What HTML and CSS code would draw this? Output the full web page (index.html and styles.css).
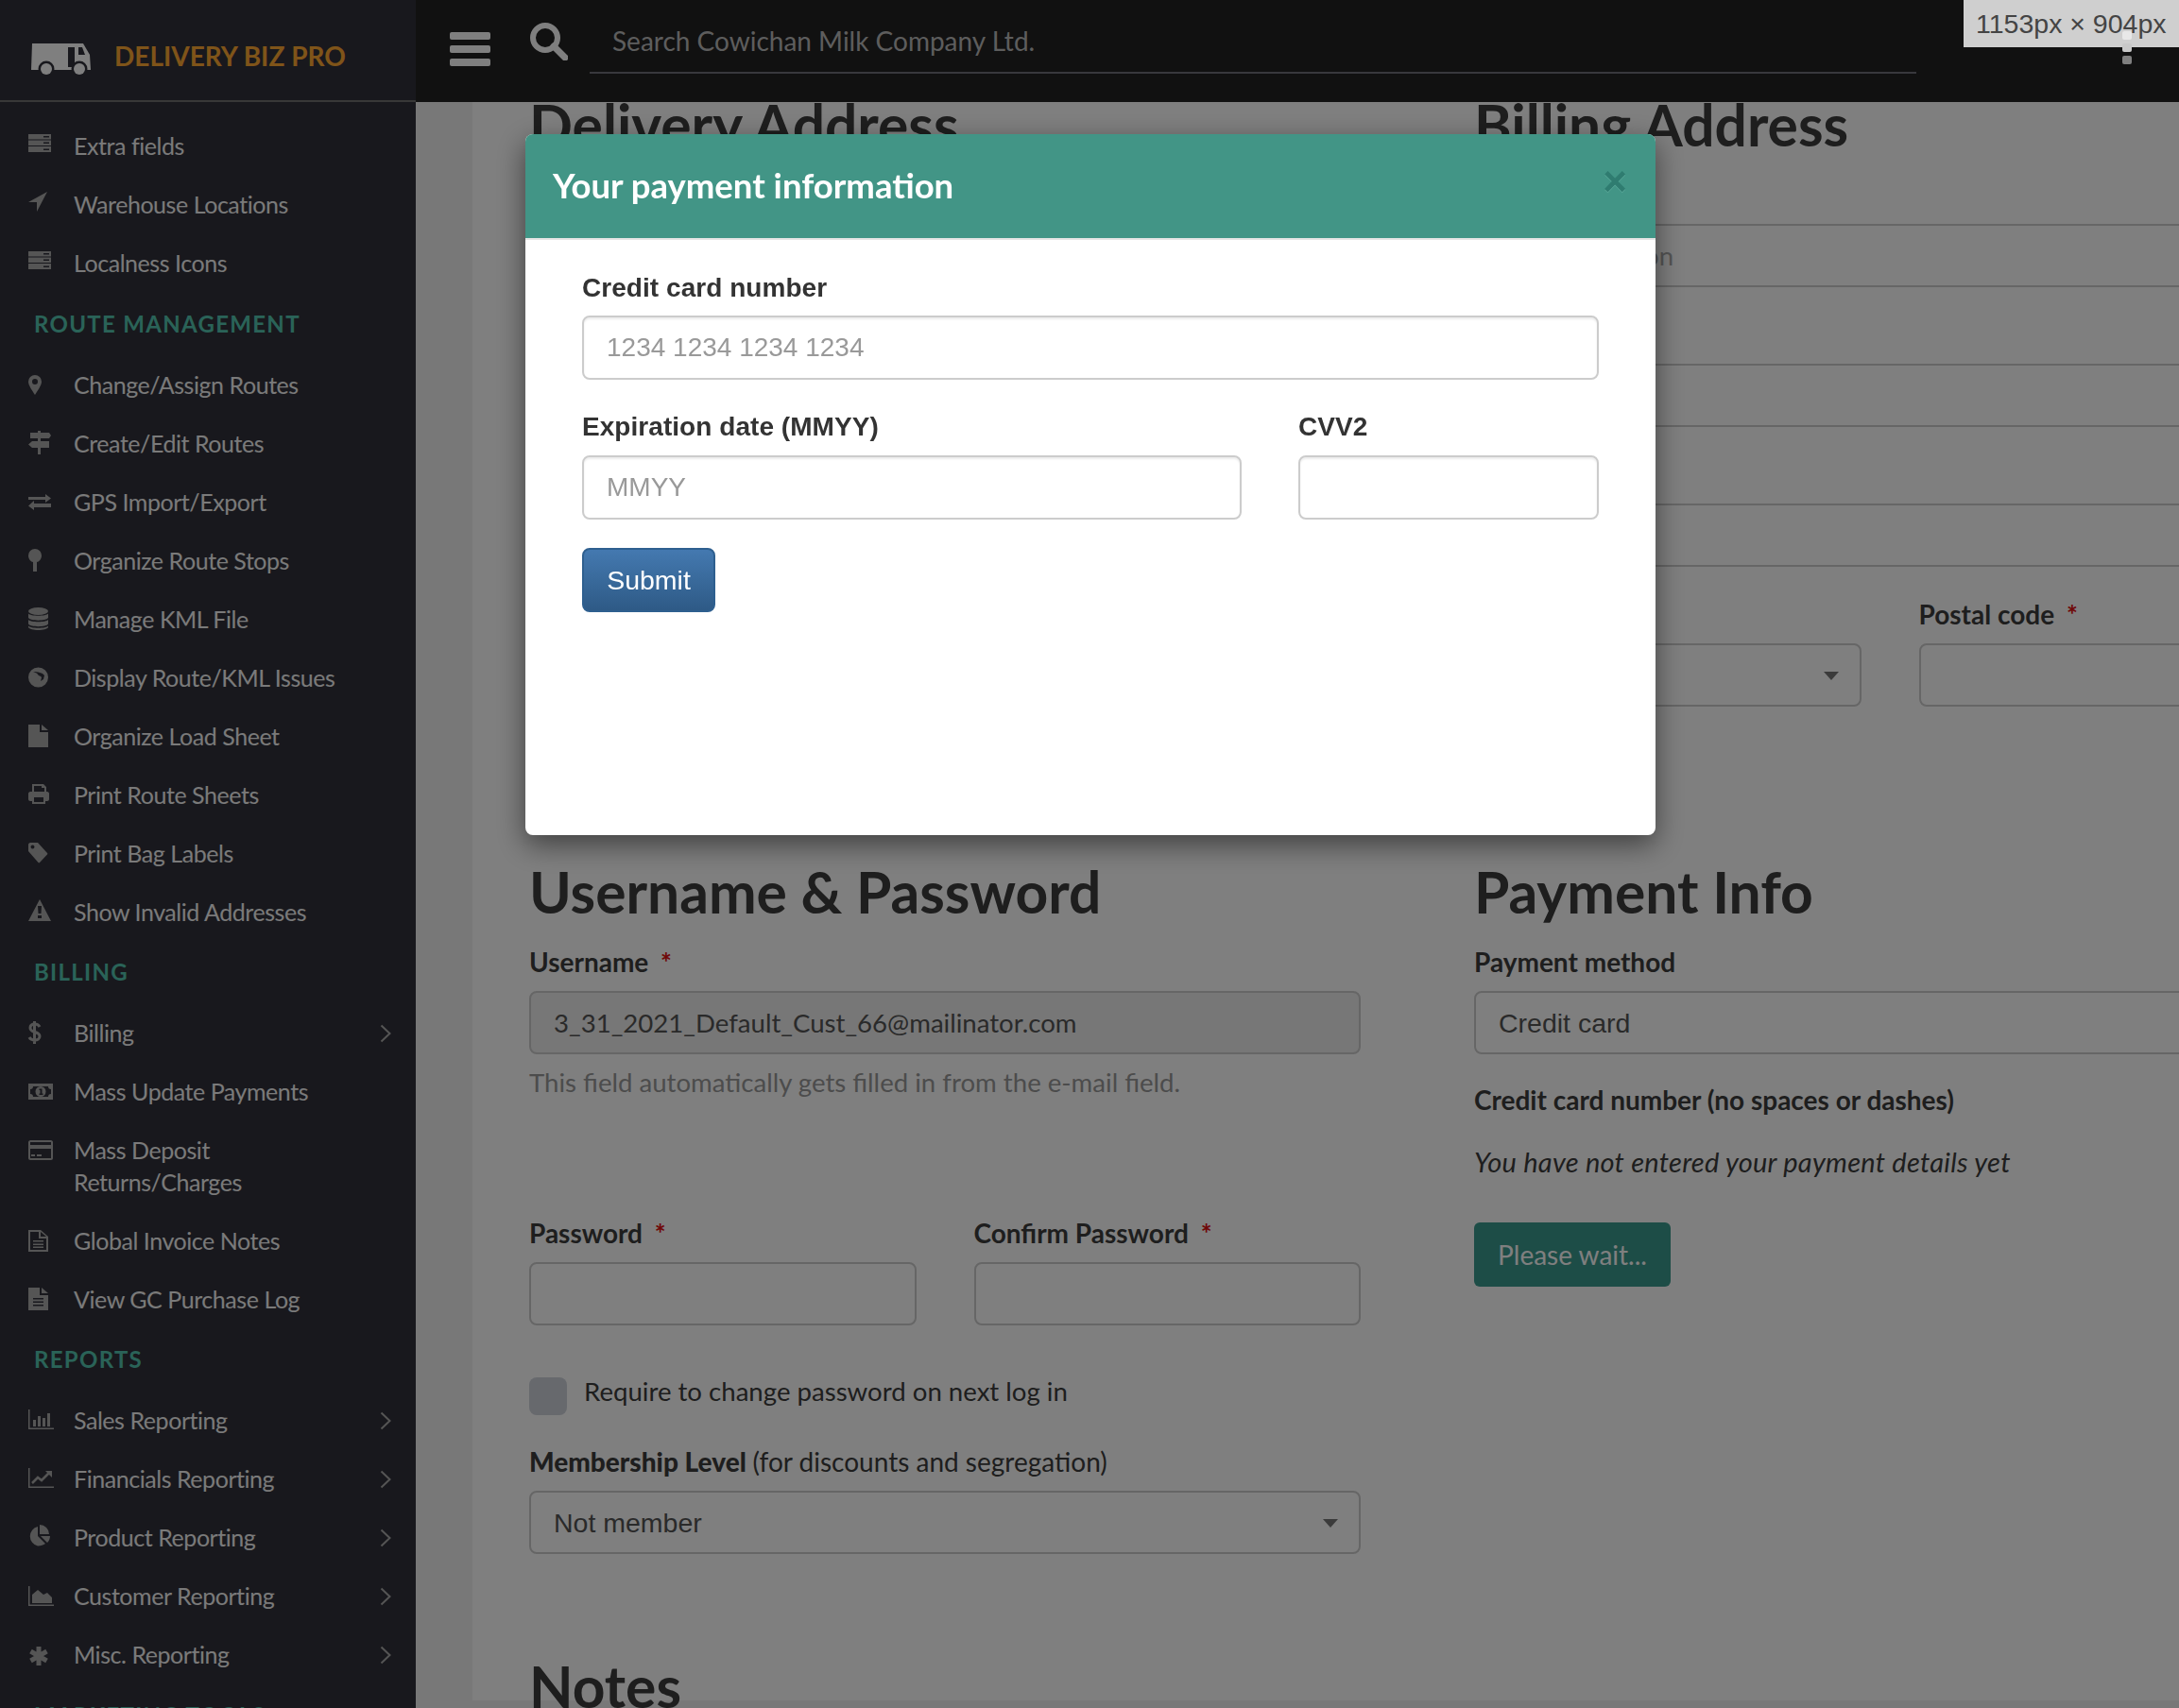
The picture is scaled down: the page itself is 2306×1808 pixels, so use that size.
FILE: index.html
```html
<!DOCTYPE html>
<html lang="en">
<head>
    <meta charset="UTF-8">
    <meta name="viewport" content="width=device-width, initial-scale=1.0">
    <title>Delivery Biz Pro</title>
    <link rel="stylesheet" href="styles.css">
</head>
<body>
    <svg class="sprite" width="0" height="0">
        <symbol id="i-server" viewBox="0 0 28 26">
            <path fill-rule="evenodd" d="M0 3h24v5.500H0zM16 5v1.500h6V5zM0 9.500h24V15H0zM16 11.500v1.500h6v-1.500zM0 16h24v6H0zM16 18.500V20h6v-1.500z"/>
        </symbol>
        <symbol id="i-chevron" viewBox="0 0 12 20">
            <path d="M1.500 1.500 10.500 10l-9 8.500" fill="none" stroke="#aaa" stroke-width="2"/>
        </symbol>
    </svg>

    <aside class="sidebar">
        <div class="brand">
            <svg class="brand-logo" width="65" height="36" viewBox="0 0 65 36">
                <path fill="#fff" d="M3 1h54l7 12 1 16H2z"/>
                <path fill="#31313a" d="M41 5h7v21h-7zM52 5h4l3 8h-7z"/>
                <circle cx="18" cy="28" r="8.500" fill="#31313a"/>
                <circle cx="18" cy="28" r="6" fill="#fff"/>
                <circle cx="53" cy="28" r="8.500" fill="#31313a"/>
                <circle cx="53" cy="28" r="6" fill="#fff"/>
            </svg>
            <span class="brand-name">DELIVERY BIZ PRO</span>
        </div>
        <ul class="nav">
            <li class="nav-item">
                <svg class="nav-icon" viewBox="0 0 28 26"><use href="#i-server"/></svg>
                <span class="nav-text">Extra fields</span>
            </li>
            <li class="nav-item">
                <svg class="nav-icon" viewBox="0 0 28 26"><path d="M20 2 0 13h9v10z"/></svg>
                <span class="nav-text">Warehouse Locations</span>
            </li>
            <li class="nav-item">
                <svg class="nav-icon" viewBox="0 0 28 26"><use href="#i-server"/></svg>
                <span class="nav-text">Localness Icons</span>
            </li>

            <li class="nav-title">ROUTE MANAGEMENT</li>
            <li class="nav-item">
                <svg class="nav-icon" viewBox="0 0 28 26"><path fill-rule="evenodd" d="M7 5a7 7 0 0 1 7 7c0 4-4 9-7 14-3-5-7-10-7-14a7 7 0 0 1 7-7zm0 4a3 3 0 1 0 0 6 3 3 0 0 0 0-6z"/></svg>
                <span class="nav-text">Change/Assign Routes</span>
            </li>
            <li class="nav-item">
                <svg class="nav-icon" viewBox="0 0 28 26"><path d="M10 2h3v2h9l2 3-2 3H13v3h9v7H13v7h-3v-7H4l-4-3.500L4 13h6v-3H2V4h8z"/></svg>
                <span class="nav-text">Create/Edit Routes</span>
            </li>
            <li class="nav-item">
                <svg class="nav-icon" viewBox="0 0 28 26"><path d="M0 10h18V7l6 4.500-6 4.500v-3H0zM24 17H6v-3L0 19.500 6 24v-3h18z"/></svg>
                <span class="nav-text">GPS Import/Export</span>
            </li>
            <li class="nav-item">
                <svg class="nav-icon" viewBox="0 0 28 26"><path d="M7 3a7 7 0 0 1 7 7c0 4-3 7-5 7v10H5V17c-2 0-5-3-5-7a7 7 0 0 1 7-7z"/></svg>
                <span class="nav-text">Organize Route Stops</span>
            </li>
            <li class="nav-item">
                <svg class="nav-icon" viewBox="0 0 28 26"><ellipse cx="10.500" cy="7" rx="10.500" ry="4"/><path d="M0 9.500c2 3 19 3 21 0V14c-2 3.500-19 3.500-21 0zM0 16c2 3 19 3 21 0v4.500c-2 3.500-19 3.500-21 0zM0 22.500c2 3 19 3 21 0V24c-2 4-19 4-21 0z"/></svg>
                <span class="nav-text">Manage KML File</span>
            </li>
            <li class="nav-item">
                <svg class="nav-icon" viewBox="0 0 28 26"><path fill-rule="evenodd" d="M10.500 4.500a10.500 10.500 0 1 1 0 21 10.500 10.500 0 0 1 0-21zM5 9c2 1 4 1 5 3s3 1 4 3l-1 4 3-2 1-4c-2-3-7-4-12-4z"/></svg>
                <span class="nav-text">Display Route/KML Issues</span>
            </li>
            <li class="nav-item">
                <svg class="nav-icon" viewBox="0 0 28 26"><path d="M0 3h12v8h9v16H0zM14 3l7 6h-7z"/></svg>
                <span class="nav-text">Organize Load Sheet</span>
            </li>
            <li class="nav-item">
                <svg class="nav-icon" viewBox="0 0 28 26"><path fill-rule="evenodd" d="M4 4h12l3 3v5h1c1 0 2 1 2 2v6c0 1-1 2-2 2h-2v3H4v-3H2c-1 0-2-1-2-2v-6c0-1 1-2 2-2h2zm2 2v6h11V8h-3V6zm0 12v5h10v-5z"/></svg>
                <span class="nav-text">Print Route Sheets</span>
            </li>
            <li class="nav-item">
                <svg class="nav-icon" viewBox="0 0 28 26"><path fill-rule="evenodd" d="M2 4h8l10 11c.5.500.5 1 0 1.500L12 25c-.5.500-1 .5-1.500 0L0 13V6c0-1 1-2 2-2zm2.500 2.500a2 2 0 1 0 0 4 2 2 0 0 0 0-4z"/></svg>
                <span class="nav-text">Print Bag Labels</span>
            </li>
            <li class="nav-item">
                <svg class="nav-icon" viewBox="0 0 28 26"><path fill-rule="evenodd" d="M12 2 24 25H0zM10 9l.5 8h3l.5-8zm0 10v3h4v-3z"/></svg>
                <span class="nav-text">Show Invalid Addresses</span>
            </li>

            <li class="nav-title nav-title-short">BILLING</li>
            <li class="nav-item">
                <svg class="nav-icon" viewBox="0 0 28 26"><path fill="none" stroke="#aaa" stroke-width="3" d="M12 9c-1-2-3-3-5-3-3 0-5 1.500-5 4 0 6 10 3 10 9 0 2.500-2.500 4-5 4-3 0-5-1-6-3M6.500 3v24"/></svg>
                <span class="nav-text">Billing</span>
                <svg class="nav-arrow" viewBox="0 0 12 20"><use href="#i-chevron"/></svg>
            </li>
            <li class="nav-item">
                <svg class="nav-icon" viewBox="0 0 28 26"><path fill-rule="evenodd" d="M0 7h26v17H0zM5 10c0 2-1 3-3 3v5c2 0 3 1 3 3h16c0-2 1-3 3-3v-5c-2 0-3-1-3-3zm8 0a5.500 5.500 0 1 1 0 11 5.500 5.500 0 0 1 0-11zm-1.500 2.500v1.500h1v3.500h-1V19h4v-1.500h-1v-5z"/></svg>
                <span class="nav-text">Mass Update Payments</span>
            </li>
            <li class="nav-item">
                <svg class="nav-icon" viewBox="0 0 28 26"><path fill-rule="evenodd" d="M2 5h22c1 0 2 1 2 2v17c0 1-1 2-2 2H2c-1 0-2-1-2-2V7c0-1 1-2 2-2zm0 2v3h22V7zm0 7v10h22V14zm1 6h4v2H3zm6 0h5v2H9z"/></svg>
                <span class="nav-text">Mass Deposit<br>Returns/Charges</span>
            </li>
            <li class="nav-item">
                <svg class="nav-icon" viewBox="0 0 28 26"><path fill-rule="evenodd" d="M0 4h13l8 7v16H0zm2 2v19h17V13h-8V6zm11 0v5h6zM5 15h11v1.500H5zm0 3.500h11V20H5zm0 3h11V23H5z"/></svg>
                <span class="nav-text">Global Invoice Notes</span>
            </li>
            <li class="nav-item">
                <svg class="nav-icon" viewBox="0 0 28 26"><path fill-rule="evenodd" d="M0 3h12v8h9v16H0zM14 3l7 6h-7zM5 14v1.500h11V14zm0 3.500V19h11v-1.500zm0 3.500v1.500h11V21z"/></svg>
                <span class="nav-text">View GC Purchase Log</span>
            </li>

            <li class="nav-title nav-title-short">REPORTS</li>
            <li class="nav-item">
                <svg class="nav-icon" viewBox="0 0 28 26"><path d="M0 4h1.500v19.500H27V25H0zM5 15h3v7H5zM10 11h3v11h-3zM15 13h3v9h-3zM20 8h3v14h-3z"/></svg>
                <span class="nav-text">Sales Reporting</span>
                <svg class="nav-arrow" viewBox="0 0 12 20"><use href="#i-chevron"/></svg>
            </li>
            <li class="nav-item">
                <svg class="nav-icon" viewBox="0 0 28 26"><path d="M0 4h1.500v19.500H27V25H0z"/><path d="m4 20 6-6 4 3 8-8" fill="none" stroke="#aaa" stroke-width="2.500"/><path d="M18 7h7v7z"/></svg>
                <span class="nav-text">Financials Reporting</span>
                <svg class="nav-arrow" viewBox="0 0 12 20"><use href="#i-chevron"/></svg>
            </li>
            <li class="nav-item">
                <svg class="nav-icon" viewBox="0 0 28 26"><path d="M10 4v10l8 8c-2 1.500-5 2.500-8 2.500a10.500 10.500 0 0 1 0-20.500zM12 2a10 10 0 0 1 10 10H12zM23 14c0 2.500-1 5-3 7l-7-7z"/></svg>
                <span class="nav-text">Product Reporting</span>
                <svg class="nav-arrow" viewBox="0 0 12 20"><use href="#i-chevron"/></svg>
            </li>
            <li class="nav-item">
                <svg class="nav-icon" viewBox="0 0 28 26"><path d="M0 5h1.500v19.500H27V26H0zM4 23V14l6-5 6 5 4-2 5 5v6z"/></svg>
                <span class="nav-text">Customer Reporting</span>
                <svg class="nav-arrow" viewBox="0 0 12 20"><use href="#i-chevron"/></svg>
            </li>
            <li class="nav-item">
                <svg class="nav-icon" viewBox="0 0 28 26"><path fill="none" stroke="#aaa" stroke-width="5" d="M11 7v20M2.500 12l17 10M2.500 22l17-10"/></svg>
                <span class="nav-text">Misc. Reporting</span>
                <svg class="nav-arrow" viewBox="0 0 12 20"><use href="#i-chevron"/></svg>
            </li>

            <li class="nav-title">MARKETING TOOLS</li>
        </ul>
    </aside>

    <div class="page">
        <header class="topbar">
            <div class="burger"><span></span><span></span><span></span></div>
            <svg class="search-icon" width="40" height="40" viewBox="0 0 40 40">
                <circle cx="16" cy="16" r="13" fill="none" stroke="#fff" stroke-width="6"/>
                <path d="m25 25 12 12" fill="none" stroke="#fff" stroke-width="7" stroke-linecap="round"/>
            </svg>
            <input class="search-box" type="text" placeholder="Search Cowichan Milk Company Ltd.">
        </header>

        <main class="content">
            <div class="panel">
                <section class="cols address-cols">
                    <div>
                        <h2>Delivery Address</h2>
                        <label class="field-label">Company</label>
                        <input class="field field-stack" type="text">
                        <label class="field-label">Address</label>
                        <input class="field field-stack" type="text">
                        <label class="field-label">City</label>
                        <input class="field field-stack" type="text">
                    </div>
                    <div>
                        <h2>Billing Address</h2>
                        <label class="field-label">Company</label>
                        <input class="field field-stack" type="text" placeholder="Pickup location">
                        <label class="field-label">Address</label>
                        <input class="field field-stack" type="text">
                        <label class="field-label">City</label>
                        <input class="field field-stack" type="text">
                        <div class="split">
                            <div>
                                <label class="field-label">Province</label>
                                <div class="select-wrap"><select class="field select"><option></option></select></div>
                            </div>
                            <div>
                                <label class="field-label">Postal code <span class="req">*</span></label>
                                <input class="field" type="text">
                            </div>
                        </div>
                    </div>
                </section>

                <section class="cols">
                    <div>
                        <h2>Username &amp; Password</h2>
                        <label class="field-label">Username <span class="req">*</span></label>
                        <input class="field field-off" type="text" value="3_31_2021_Default_Cust_66@mailinator.com" readonly>
                        <p class="help">This field automatically gets filled in from the e-mail field.</p>
                        <div class="split password-row">
                            <div>
                                <label class="field-label">Password <span class="req">*</span></label>
                                <input class="field" type="password">
                            </div>
                            <div>
                                <label class="field-label">Confirm Password <span class="req">*</span></label>
                                <input class="field" type="password">
                            </div>
                        </div>
                        <div class="check-row">
                            <span class="check"></span>
                            <span>Require to change password on next log in</span>
                        </div>
                        <label class="field-label"><b>Membership Level</b> <span class="light">(for discounts and segregation)</span></label>
                        <div class="select-wrap"><select class="field select"><option>Not member</option></select></div>
                        <h2 class="notes-title">Notes</h2>
                    </div>
                    <div>
                        <h2>Payment Info</h2>
                        <label class="field-label">Payment method</label>
                        <div class="select-wrap"><select class="field select"><option>Credit card</option></select></div>
                        <p class="field-label card-label">Credit card number (no spaces or dashes)</p>
                        <p class="no-card">You have not entered your payment details yet</p>
                        <button class="wait-btn" type="button">Please wait...</button>
                    </div>
                </section>
            </div>
        </main>
    </div>

    <div class="backdrop"></div>

    <div class="modal">
        <div class="modal-head">
            <h3>Your payment information</h3>
            <button class="modal-close" type="button">&times;</button>
        </div>
        <form class="modal-body">
            <label class="pay-label">Credit card number</label>
            <input class="pay-input" type="text" placeholder="1234 1234 1234 1234">
            <div class="pay-row">
                <div>
                    <label class="pay-label">Expiration date (MMYY)</label>
                    <input class="pay-input" type="text" placeholder="MMYY">
                </div>
                <div>
                    <label class="pay-label">CVV2</label>
                    <input class="pay-input" type="text">
                </div>
            </div>
            <button class="pay-submit" type="button">Submit</button>
        </form>
    </div>

    <div class="size-tag">1153px &times; 904px</div>
    <div class="dots"><span class="dot-a"></span><span class="dot-b"></span><span class="dot-c"></span></div>
</body>
</html>
```

FILE: styles.css
```css
* {
    box-sizing: border-box;
}
html, body {
    height: 100%;
}
body {
    margin: 0;
    height: 1808px;
    overflow: hidden;
    display: flex;
    font-family: Lato, sans-serif;
    font-size: 27.6px;
    color: #3c3c3c;
    background: #fff;
}
.sprite {
    position: absolute;
}

/* sidebar */
.sidebar {
    width: 440px;
    flex: none;
    height: 1808px;
    overflow: hidden;
    background: #31313a;
}
.brand {
    height: 108px;
    border-bottom: 2px solid #707070;
    display: flex;
    align-items: flex-start;
    padding: 45px 0 0 31px;
}
.brand-logo {
    flex: none;
}
.brand-name {
    margin: -3px 0 0 25px;
    font-size: 28px;
    line-height: 34px;
    font-weight: 700;
    color: #fea832;
}
.nav {
    list-style: none;
    margin: 0;
    padding: 15px 0 0;
}
.nav-item {
    display: flex;
    align-items: flex-start;
    padding: 14px 26px 14px 30px;
    color: #f4f4f4;
    font-size: 25px;
    line-height: 34px;
    letter-spacing: -0.45px;
}
.nav-icon {
    flex: none;
    width: 28px;
    height: 26px;
    margin: 2px 20px 0 0;
    overflow: visible;
    fill: #aaa;
}
.nav-text {
    flex: 1;
}
.nav-arrow {
    flex: none;
    width: 12px;
    height: 20px;
    margin-top: 8px;
}
.nav-title {
    height: 67px;
    padding-left: 36px;
    line-height: 67px;
    font-size: 24px;
    font-weight: 700;
    letter-spacing: 1.3px;
    color: #55c7b1;
}
.nav-title-short {
    height: 66px;
    line-height: 66px;
}

/* top bar */
.page {
    flex: 1;
    min-width: 0;
    height: 1808px;
    display: flex;
    flex-direction: column;
}
.topbar {
    height: 108px;
    flex: none;
    display: flex;
    align-items: flex-start;
    background: #222;
    padding-left: 36px;
}
.burger {
    width: 43px;
    margin-top: 34px;
    display: flex;
    flex-direction: column;
    gap: 6px;
}
.burger span {
    height: 8px;
    border-radius: 2px;
    background: #fff;
}
.search-icon {
    flex: none;
    margin: 24px 0 0 42px;
}
.search-box {
    width: 1404px;
    height: 78px;
    margin-left: 23px;
    padding: 10px 24px 0;
    border: 0;
    border-bottom: 2px solid #70707a;
    background: none;
    font: 28px Lato, sans-serif;
}
.search-box::placeholder {
    color: #bbb;
    opacity: 1;
}

/* page behind the dialog */
.content {
    flex: 1;
    min-height: 0;
    overflow: hidden;
    padding-left: 60px;
    background: #f0f0f0;
}
.panel {
    height: 100%;
    padding: 0 60px;
    background: #fff;
}
.cols {
    display: grid;
    grid-template-columns: 880px 880px;
    column-gap: 120px;
}
.address-cols {
    margin-top: -8px;
    margin-bottom: 164px;
}
h2 {
    margin: 0 0 26px;
    font-size: 60.5px;
    line-height: 64px;
    font-weight: 700;
    color: #3c3c3c;
}
.field-label {
    display: block;
    margin: 0 0 15px;
    font-size: 28px;
    line-height: 32px;
    font-weight: 700;
}
.light {
    font-weight: 400;
}
.req {
    margin-left: 6px;
    color: #e01010;
}
.field {
    display: block;
    width: 100%;
    height: 67px;
    padding: 0 24px;
    border: 2px solid #ccc;
    border-radius: 8px;
    background: #fff;
    font: 27.6px Lato, sans-serif;
    color: #555;
}
.field::placeholder {
    color: #aaa;
    opacity: 1;
}
.field-stack {
    margin-bottom: 34px;
}
.field-off {
    background: #eee;
}
.select {
    appearance: none;
    font-family: "Liberation Sans", Arial, sans-serif;
    font-size: 28.5px;
}
.select-wrap {
    position: relative;
}
.select-wrap::after {
    content: "";
    position: absolute;
    right: 24px;
    top: 30px;
    border-left: 8px solid transparent;
    border-right: 8px solid transparent;
    border-top: 9px solid #777;
}
.help {
    margin: 13px 0 0;
    line-height: 34px;
    color: #999;
}
.split {
    display: grid;
    grid-template-columns: 1fr 1fr;
    column-gap: 61px;
}
.password-row {
    margin-top: 126px;
}
.check-row {
    display: flex;
    align-items: flex-start;
    gap: 18px;
    margin: 55px 0 33px;
    line-height: 30px;
}
.check {
    width: 40px;
    height: 40px;
    border-radius: 8px;
    background: #ced3db;
}
.notes-title {
    margin-top: 108px;
}
.card-label {
    margin: 32px 0 33px;
}
.no-card {
    margin: 0;
    font-size: 29px;
    letter-spacing: 0.26px;
    line-height: 34px;
    font-style: italic;
}
.wait-btn {
    display: block;
    width: 208px;
    height: 68px;
    margin-top: 47px;
    border: 0;
    border-radius: 6px;
    background: #3a9a8e;
    color: #fff;
    font: 28px Lato, sans-serif;
}

/* dialog */
.backdrop {
    position: fixed;
    inset: 0;
    background: rgba(0, 0, 0, 0.5);
}
.modal {
    position: fixed;
    left: 556px;
    top: 142px;
    width: 1196px;
    height: 742px;
    border-radius: 8px;
    background: #fff;
    box-shadow: 0 10px 30px rgba(0, 0, 0, 0.5);
    overflow: hidden;
}
.modal-head {
    height: 112px;
    display: flex;
    justify-content: space-between;
    align-items: flex-start;
    padding: 0 30px 0 29px;
    border-bottom: 2px solid #e5e5e5;
    background: #429586;
}
.modal-head h3 {
    margin: 32px 0 0;
    font-size: 36.5px;
    line-height: 44px;
    font-weight: 700;
    color: #fff;
}
.modal-close {
    margin-top: 27px;
    padding: 0;
    border: 0;
    background: none;
    font: bold 44px/46px "Liberation Sans", Arial, sans-serif;
    color: #2f7c70;
    text-shadow: 0 1px 0 #5aa899;
}
.modal-body {
    padding: 34px 60px 0;
    font-family: "Liberation Sans", Arial, sans-serif;
}
.pay-label {
    display: block;
    margin-bottom: 12px;
    font-size: 28px;
    letter-spacing: 0.05px;
    line-height: 34px;
    font-weight: 700;
    color: #333;
}
.pay-input {
    display: block;
    width: 100%;
    height: 68px;
    padding: 0 24px;
    border: 2px solid #ccc;
    border-radius: 8px;
    background: #fff;
    box-shadow: inset 0 2px 2px rgba(0, 0, 0, 0.075);
    font: 28px "Liberation Sans", Arial, sans-serif;
}
.pay-input::placeholder {
    color: #999;
    opacity: 1;
}
.pay-row {
    display: grid;
    grid-template-columns: 1fr 318px;
    column-gap: 60px;
    margin-top: 33px;
}
.pay-row .pay-label {
    margin-bottom: 13px;
}
.pay-submit {
    display: block;
    width: 141px;
    height: 68px;
    margin-top: 30px;
    border: 2px solid #2e5f8f;
    border-radius: 8px;
    background: linear-gradient(#4479b0, #2e5a86);
    color: #fff;
    font: 28.5px "Liberation Sans", Arial, sans-serif;
}

/* window size label and the menu dots over it */
.size-tag {
    position: fixed;
    top: 0;
    right: 0;
    width: 228px;
    height: 50px;
    padding-left: 13px;
    background: #cfcfcf;
    color: #444;
    font: 28.5px/50px "Liberation Sans", Arial, sans-serif;
}
.dots {
    position: fixed;
    top: 33px;
    left: 2246px;
    width: 10px;
    display: flex;
    flex-direction: column;
    gap: 4px;
}
.dots span {
    height: 9px;
    border-radius: 2px;
}
.dot-a {
    background: #e8e8e8;
}
.dot-b {
    background: #c8c8c8;
}
.dot-c {
    background: #808080;
}
```
